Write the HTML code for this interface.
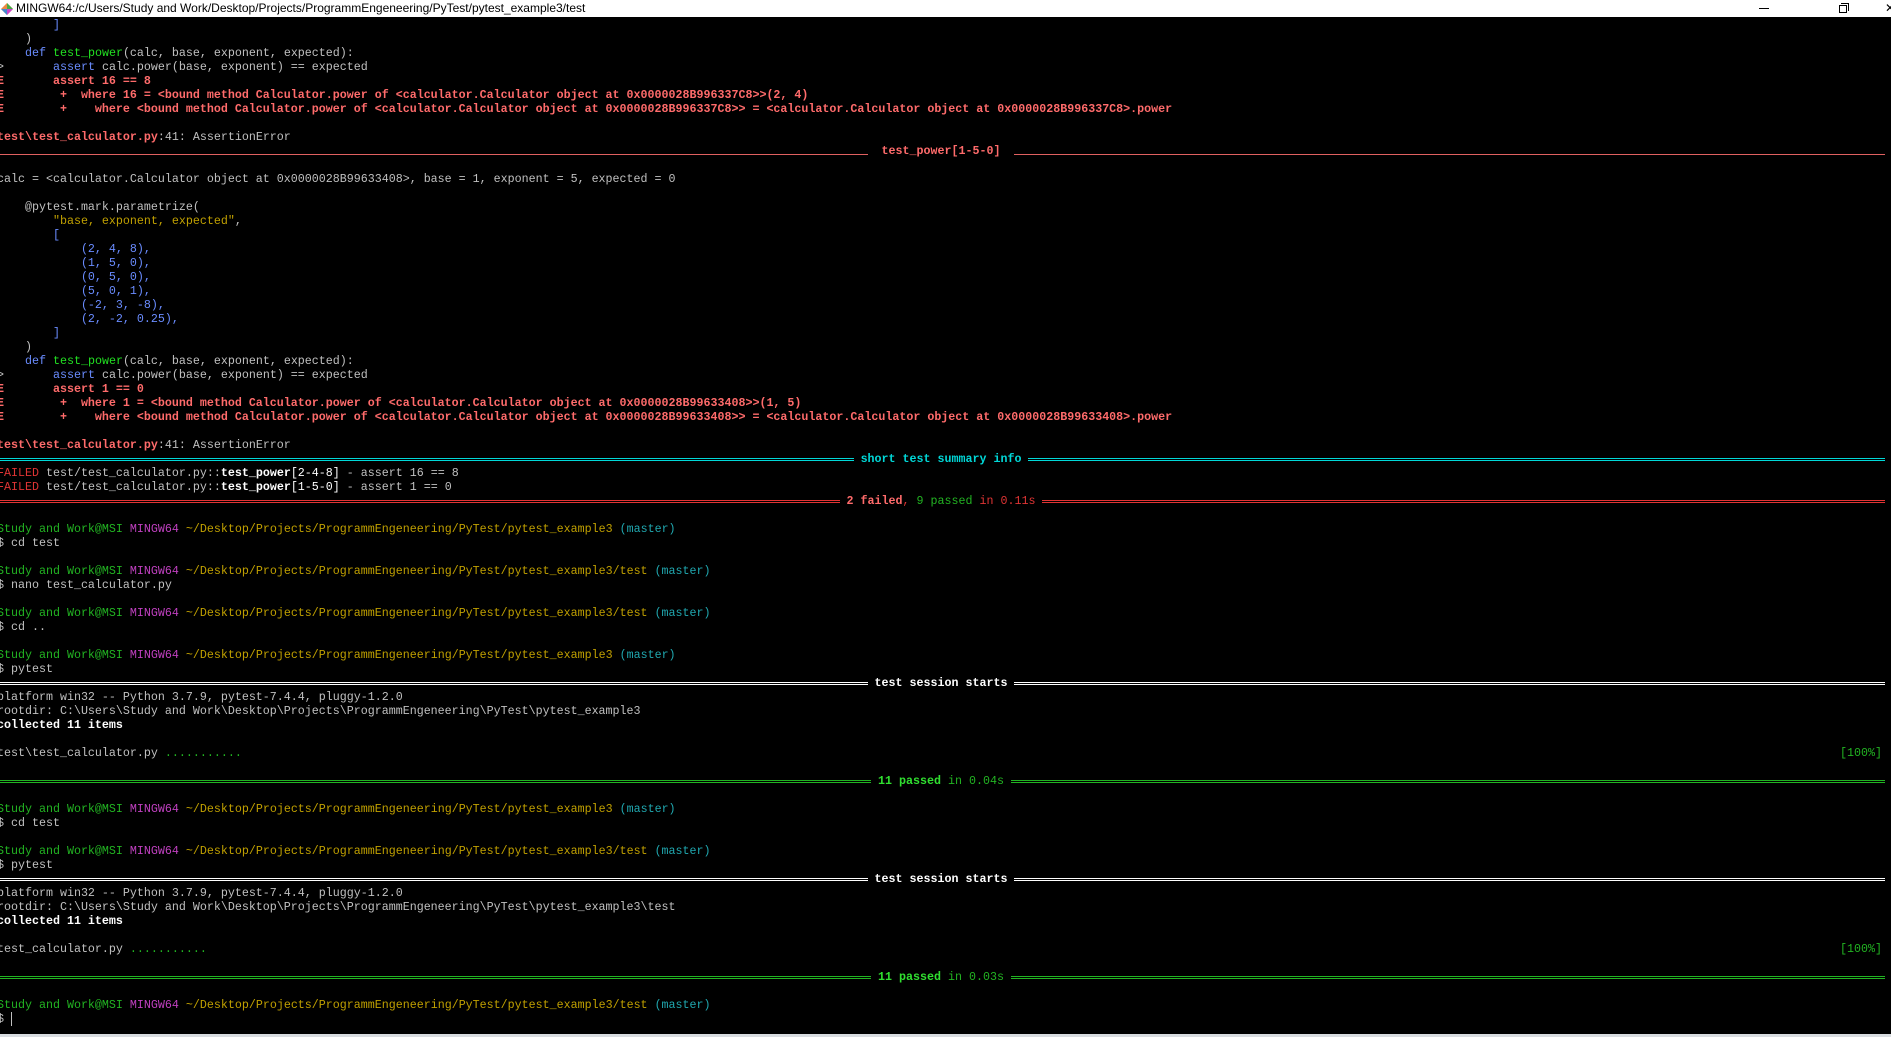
<!DOCTYPE html>
<html><head><meta charset="utf-8"><style>
*{margin:0;padding:0;box-sizing:border-box}
body{width:1891px;height:1037px;background:#000;overflow:hidden;position:relative;font-family:"Liberation Mono",monospace}
#tb{position:absolute;left:0;top:0;width:1891px;height:17px;background:#fff;font-family:"Liberation Sans",sans-serif;font-size:12px;color:#000;line-height:17px}
#tb .t{position:absolute;left:16px;top:0}
#term{position:absolute;left:-3px;top:18px;width:1888px;font-size:11.667px;line-height:14px;color:#c0c0c0}
.l{height:14px;position:relative;white-space:pre;overflow:hidden}
.b{font-weight:bold}
.e{color:#ff6b6b;font-weight:bold}
.r{color:#e03434}
.bl{color:#6a8cff}
.gr{color:#22e022}
.y{color:#c0a000}
.w{color:#fff;font-weight:bold}
.pg{color:#22b422}
.pm{color:#c040c0}
.pc{color:#20a8b0}
.sep{display:flex;align-items:center}
.sep .f{flex:1;height:3px;border-top:1px solid;border-bottom:1px solid}
.sep .tx{padding:0 7px}
.und{display:flex;align-items:flex-end}
.und .f{flex:1;height:1px;background:#e06060;margin-bottom:3px}
.rt{position:absolute;right:3px;top:0}
</style></head><body>
<div id="tb"><svg style="position:absolute;left:1px;top:3px" width="12" height="12" viewBox="0 0 12 12"><path d="M6 0L12 6L6 12L0 6Z" fill="#e84"/><path d="M6 0L12 6L6 6Z" fill="#4a4"/><path d="M0 6L6 12L6 6Z" fill="#48c"/><path d="M6 6L12 6L6 12Z" fill="#c4c"/></svg><span class="t">MINGW64:/c/Users/Study and Work/Desktop/Projects/ProgrammEngeneering/PyTest/pytest_example3/test</span>
<div style="position:absolute;left:1759px;top:8px;width:10px;height:1px;background:#000"></div>
<div style="position:absolute;left:1839px;top:5px;width:8px;height:8px;border:1px solid #000;background:#fff"></div>
<div style="position:absolute;left:1841px;top:3px;width:8px;height:8px;border-top:1px solid #000;border-right:1px solid #000"></div>
<div style="position:absolute;left:1885px;top:3px;width:10px;height:10px;font-size:12px;line-height:10px">✕</div>
</div>
<div id="term"><div class="l">        <span class="bl">]</span></div><div class="l">    )</div><div class="l">    <span class="bl">def</span> <span class="gr">test_power</span>(calc, base, exponent, expected):</div><div class="l">&gt;       <span class="bl">assert</span> calc.power(base, exponent) == expected</div><div class="l e">E       assert 16 == 8</div><div class="l e">E        +  where 16 = &lt;bound method Calculator.power of &lt;calculator.Calculator object at 0x0000028B996337C8&gt;&gt;(2, 4)</div><div class="l e">E        +    where &lt;bound method Calculator.power of &lt;calculator.Calculator object at 0x0000028B996337C8&gt;&gt; = &lt;calculator.Calculator object at 0x0000028B996337C8&gt;.power</div><div class="l"></div><div class="l"><span class="e">test\test_calculator.py</span>:41: AssertionError</div><div class="l und"><span class="f"></span><span class="tx e" style="padding:0 7px"> test_power[1-5-0] </span><span class="f"></span></div><div class="l"></div><div class="l">calc = &lt;calculator.Calculator object at 0x0000028B99633408&gt;, base = 1, exponent = 5, expected = 0</div><div class="l"></div><div class="l">    @pytest.mark.parametrize(</div><div class="l">        <span class="y">"base, exponent, expected"</span>,</div><div class="l">        <span class="bl">[</span></div><div class="l bl">            (2, 4, 8),</div><div class="l bl">            (1, 5, 0),</div><div class="l bl">            (0, 5, 0),</div><div class="l bl">            (5, 0, 1),</div><div class="l bl">            (-2, 3, -8),</div><div class="l bl">            (2, -2, 0.25),</div><div class="l">        <span class="bl">]</span></div><div class="l">    )</div><div class="l">    <span class="bl">def</span> <span class="gr">test_power</span>(calc, base, exponent, expected):</div><div class="l">&gt;       <span class="bl">assert</span> calc.power(base, exponent) == expected</div><div class="l e">E       assert 1 == 0</div><div class="l e">E        +  where 1 = &lt;bound method Calculator.power of &lt;calculator.Calculator object at 0x0000028B99633408&gt;&gt;(1, 5)</div><div class="l e">E        +    where &lt;bound method Calculator.power of &lt;calculator.Calculator object at 0x0000028B99633408&gt;&gt; = &lt;calculator.Calculator object at 0x0000028B99633408&gt;.power</div><div class="l"></div><div class="l"><span class="e">test\test_calculator.py</span>:41: AssertionError</div><div class="l sep" style="color:#00d7d7"><span class="f"></span><span class="tx b">short test summary info</span><span class="f"></span></div><div class="l"><span class="r">FAILED</span> test/test_calculator.py::<span class="w">test_power</span><span style="color:#fff">[2-4-8]</span> - assert 16 == 8</div><div class="l"><span class="r">FAILED</span> test/test_calculator.py::<span class="w">test_power</span><span style="color:#fff">[1-5-0]</span> - assert 1 == 0</div><div class="l sep" style="color:#e03434"><span class="f"></span><span class="tx"><span class="e">2 failed</span>, <span class="pg">9 passed</span> in 0.11s</span><span class="f"></span></div><div class="l"></div><div class="l"><span class="pg">Study and Work@MSI</span> <span class="pm">MINGW64</span> <span class="y">~/Desktop/Projects/ProgrammEngeneering/PyTest/pytest_example3</span> <span class="pc">(master)</span></div><div class="l">$ cd test</div><div class="l"></div><div class="l"><span class="pg">Study and Work@MSI</span> <span class="pm">MINGW64</span> <span class="y">~/Desktop/Projects/ProgrammEngeneering/PyTest/pytest_example3/test</span> <span class="pc">(master)</span></div><div class="l">$ nano test_calculator.py</div><div class="l"></div><div class="l"><span class="pg">Study and Work@MSI</span> <span class="pm">MINGW64</span> <span class="y">~/Desktop/Projects/ProgrammEngeneering/PyTest/pytest_example3/test</span> <span class="pc">(master)</span></div><div class="l">$ cd ..</div><div class="l"></div><div class="l"><span class="pg">Study and Work@MSI</span> <span class="pm">MINGW64</span> <span class="y">~/Desktop/Projects/ProgrammEngeneering/PyTest/pytest_example3</span> <span class="pc">(master)</span></div><div class="l">$ pytest</div><div class="l sep" style="color:#fff"><span class="f"></span><span class="tx b">test session starts</span><span class="f"></span></div><div class="l">platform win32 -- Python 3.7.9, pytest-7.4.4, pluggy-1.2.0</div><div class="l">rootdir: C:\Users\Study and Work\Desktop\Projects\ProgrammEngeneering\PyTest\pytest_example3</div><div class="l b" style="color:#fff">collected 11 items</div><div class="l"></div><div class="l">test\test_calculator.py <span class="pg">...........</span><span class="rt pg">[100%]</span></div><div class="l"></div><div class="l sep" style="color:#22b422"><span class="f"></span><span class="tx"><span class="b" style="color:#30e030">11 passed</span> in 0.04s</span><span class="f"></span></div><div class="l"></div><div class="l"><span class="pg">Study and Work@MSI</span> <span class="pm">MINGW64</span> <span class="y">~/Desktop/Projects/ProgrammEngeneering/PyTest/pytest_example3</span> <span class="pc">(master)</span></div><div class="l">$ cd test</div><div class="l"></div><div class="l"><span class="pg">Study and Work@MSI</span> <span class="pm">MINGW64</span> <span class="y">~/Desktop/Projects/ProgrammEngeneering/PyTest/pytest_example3/test</span> <span class="pc">(master)</span></div><div class="l">$ pytest</div><div class="l sep" style="color:#fff"><span class="f"></span><span class="tx b">test session starts</span><span class="f"></span></div><div class="l">platform win32 -- Python 3.7.9, pytest-7.4.4, pluggy-1.2.0</div><div class="l">rootdir: C:\Users\Study and Work\Desktop\Projects\ProgrammEngeneering\PyTest\pytest_example3\test</div><div class="l b" style="color:#fff">collected 11 items</div><div class="l"></div><div class="l">test_calculator.py <span class="pg">...........</span><span class="rt pg">[100%]</span></div><div class="l"></div><div class="l sep" style="color:#22b422"><span class="f"></span><span class="tx"><span class="b" style="color:#30e030">11 passed</span> in 0.03s</span><span class="f"></span></div><div class="l"></div><div class="l"><span class="pg">Study and Work@MSI</span> <span class="pm">MINGW64</span> <span class="y">~/Desktop/Projects/ProgrammEngeneering/PyTest/pytest_example3/test</span> <span class="pc">(master)</span></div><div class="l">$ <span style="border-left:1px solid #c0c0c0"> </span></div></div>
<div style="position:absolute;left:0;top:1034px;width:1891px;height:3px;background:#d8dce0"></div>
</body></html>
